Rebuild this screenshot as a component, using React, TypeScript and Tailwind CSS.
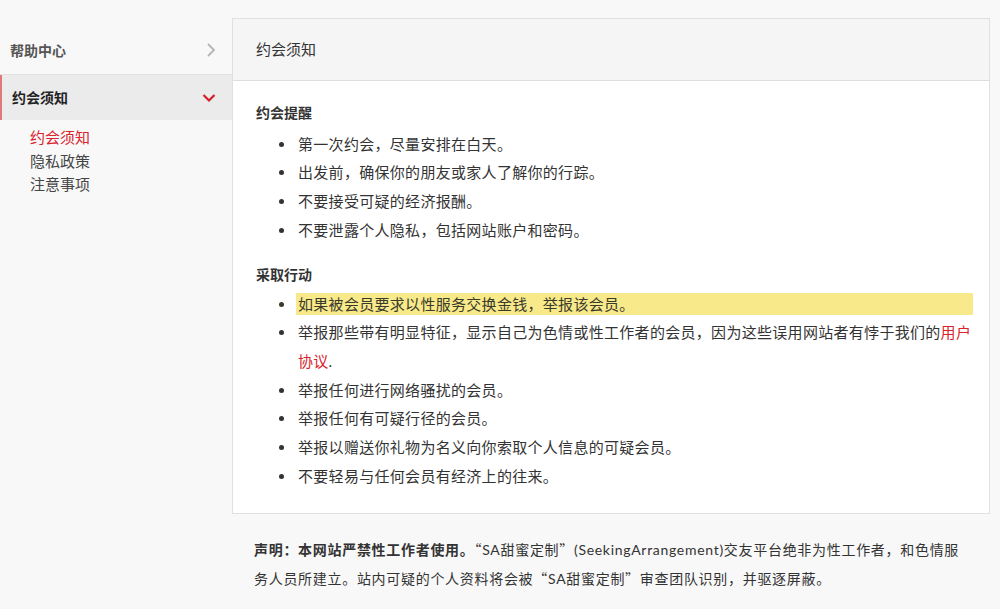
import * as React from "react"

const font = { fontFamily: 'Lato, "Noto Sans CJK SC", "Noto Sans", sans-serif' }
const cjk = { fontFamily: '"Noto Sans CJK SC", sans-serif' }

const remind = [
  "第一次约会，尽量安排在白天。",
  "出发前，确保你的朋友或家人了解你的行踪。",
  "不要接受可疑的经济报酬。",
  "不要泄露个人隐私，包括网站账户和密码。",
]

const actions = [
  "举报任何进行网络骚扰的会员。",
  "举报任何有可疑行径的会员。",
  "举报以赠送你礼物为名义向你索取个人信息的可疑会员。",
  "不要轻易与任何会员有经济上的往来。",
]

function ChevronRight() {
  return (
    <svg width="10" height="16" viewBox="0 0 10 16" fill="none">
      <path d="M2 2l6 6-6 6" stroke="#b5b5b5" strokeWidth="1.8" />
    </svg>
  )
}

function ChevronDown() {
  return (
    <svg width="14" height="10" viewBox="0 0 14 10" fill="none">
      <path d="M1.5 2l5.5 5.5L12.5 2" stroke="#d21f2b" strokeWidth="2.2" />
    </svg>
  )
}

function Quoted({ children }: { children: React.ReactNode }) {
  return (
    <>
      <span style={cjk}>“</span>
      {children}
      <span style={cjk}>”</span>
    </>
  )
}

export default function App() {
  return (
    <div className="w-[1000px] h-[609px] bg-[#f8f8f8] flex overflow-hidden text-[#333]" style={font}>
      <aside className="w-[232px] shrink-0 pt-[26px]">
        <div className="h-[49px] flex items-center justify-between pl-[10px] pr-[16px] border-b border-[#e2e2e2]">
          <span className="text-[14px] font-semibold text-[#555]">帮助中心</span>
          <ChevronRight />
        </div>
        <div className="h-[45px] flex items-center justify-between pl-[10px] pr-[16px] bg-[#ebebeb] border-l-2 border-[#e07a7a]">
          <span className="text-[14px] font-bold text-[#222]">约会须知</span>
          <ChevronDown />
        </div>
        <ul className="pl-[30px] pt-[6px] text-[15px] leading-[23.5px] text-[#444]">
          <li className="text-[#d9232d]">约会须知</li>
          <li>隐私政策</li>
          <li>注意事项</li>
        </ul>
      </aside>

      <main className="w-[758px] shrink-0 pt-[18px]">
        <section className="bg-white border border-[#e0e0e0]">
          <header className="h-[62px] flex items-center px-[23px] bg-[#f5f5f5] border-b border-[#dedede] text-[15px] text-[#333]">
            约会须知
          </header>
          <div className="pl-[23px] pr-[16px] pt-[18px] pb-[23px] text-[15px] tracking-[0.3px] leading-[28.7px]">
            <h3 className="text-[14px] tracking-normal font-bold text-[#333] mb-[2px]">约会提醒</h3>
            <ul className="list-disc pl-[40px] mb-4">
              {remind.map((t) => (
                <li key={t} className="pl-[2px]">{t}</li>
              ))}
            </ul>
            <h3 className="text-[14px] tracking-normal font-bold text-[#333]">采取行动</h3>
            <ul className="list-disc pl-[40px]">
              <li className="pl-[2px] bg-[#f8e98a] leading-[22px] my-[3.5px] text-[#3a3a2a]">
                如果被会员要求以性服务交换金钱，举报该会员。
              </li>
              <li className="pl-[2px]">
                举报那些带有明显特征，显示自己为色情或性工作者的会员，因为这些误用网站者有悖于我们的
                <span className="text-[#d9232d]">用户协议</span>.
              </li>
              {actions.map((t) => (
                <li key={t} className="pl-[2px]">{t}</li>
              ))}
            </ul>
          </div>
        </section>
        <p className="pl-[22px] pr-[18px] pt-[21px] text-[14px] tracking-[0.7px] leading-[29px] text-[#333]">
          <b className="font-bold">声明：本网站严禁性工作者使用。</b>
          <Quoted>SA甜蜜定制</Quoted>(SeekingArrangement)交友平台绝非为性工作者，和色情服务人员所建立。站内可疑的个人资料将会被
          <Quoted>SA甜蜜定制</Quoted>审查团队识别，并驱逐屏蔽。
        </p>
      </main>
    </div>
  )
}
